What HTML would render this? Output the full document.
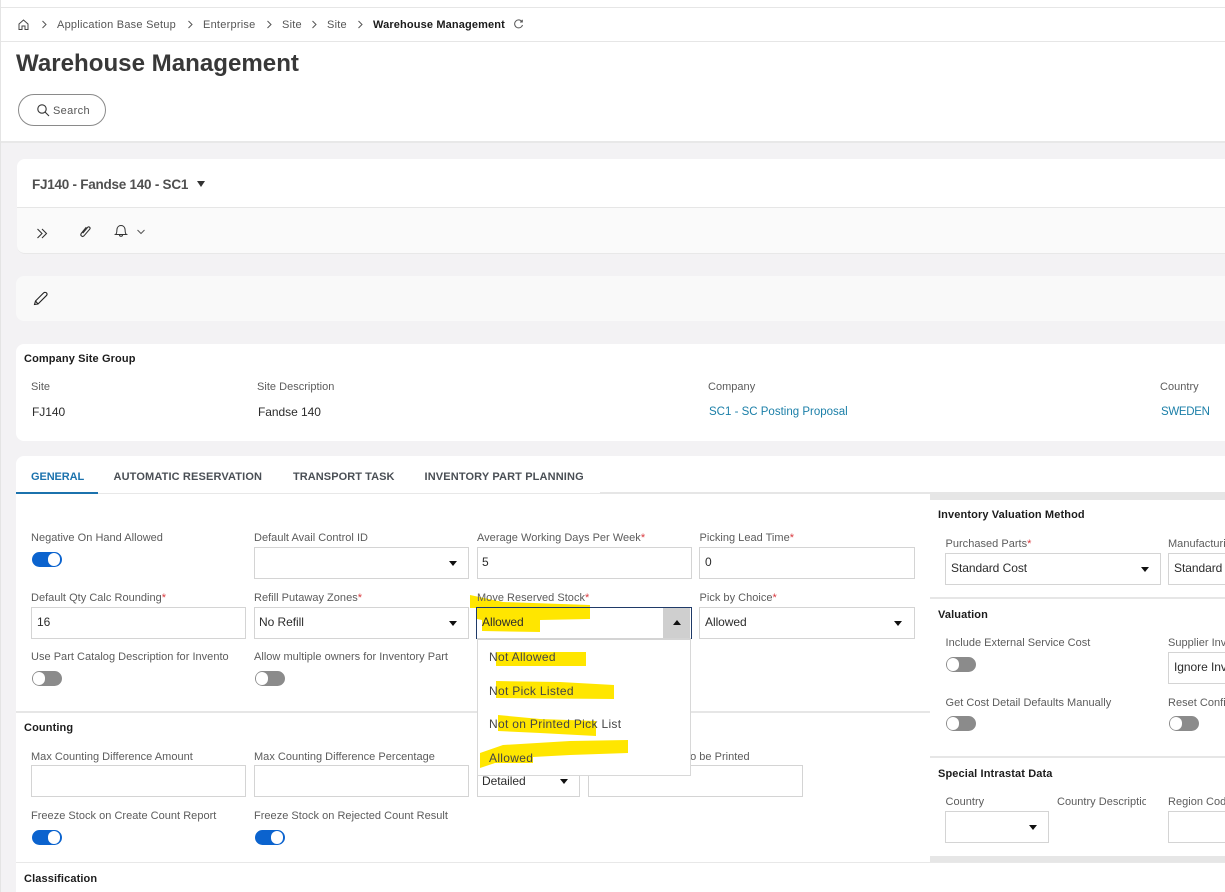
<!DOCTYPE html>
<html><head><meta charset="utf-8"><title>Warehouse Management</title>
<style>
html,body{margin:0;padding:0}
body{width:1225px;height:892px;overflow:hidden;position:relative;background:#f3f2f4;font-family:"Liberation Sans",sans-serif;font-size:11px;color:#333}
div,span,svg{position:absolute}
.l{color:#5c5c5c;white-space:nowrap;line-height:14px;letter-spacing:.02px;margin-top:1px}
.l i{color:#d9393e;font-style:normal}
.h{color:#1c1c1c;font-weight:bold;white-space:nowrap;line-height:14px;font-size:11px;letter-spacing:.12px;margin-top:1px}
.v{color:#2c2c2c;white-space:nowrap;line-height:14px;font-size:12px;letter-spacing:-.05px}
.a{color:#1b7fa8;white-space:nowrap;line-height:14px;font-size:11.5px;letter-spacing:0;margin-top:1px}
.f{background:#fff;border:1px solid #d4d4d4;height:30px;box-sizing:content-box}
.d{width:0;height:0;border-left:4px solid transparent;border-right:4px solid transparent;border-top:5px solid #111}
.u{width:30px;height:15px;border-radius:8px;background:#8b8b8b}
.u:after{content:"";position:absolute;left:1px;top:1px;width:12px;height:13px;border-radius:7px;background:#fff}
.o{background:#0b63ce}
.o:after{left:16px}
.tab{font-size:11px;font-weight:bold;color:#4a4f55;white-space:nowrap;line-height:14px;letter-spacing:.14px;margin-top:1px}
.bc{color:#555;white-space:nowrap;line-height:14px;letter-spacing:.24px;margin-top:1px}
.g{background:#e6e6e6}
.m{color:#444;letter-spacing:.32px;z-index:5}
</style></head><body>

<!-- top white area -->
<div style="left:1px;top:0;width:1224px;height:141px;background:#fff"></div>
<div style="left:0;top:0;width:1px;height:892px;background:#e4e4e4"></div>
<div style="left:1px;top:7px;width:1224px;height:1px;background:#e6e6e6"></div>
<div style="left:1px;top:41px;width:1224px;height:1px;background:#e6e6e6"></div>
<div style="left:1px;top:141px;width:1224px;height:2px;background:#e8e8e8"></div>

<!-- breadcrumb -->
<svg style="left:17px;top:18px" width="13" height="13" viewBox="0 0 13 13" fill="none" stroke="#444" stroke-width="1"><path d="M2 6 6.5 2 11 6V11.5H8V8H5V11.5H2Z"/></svg>
<svg style="left:40.5px;top:20px" width="7" height="9" viewBox="0 0 7 9" fill="none" stroke="#555"><path d="M1.5 1 5 4.5 1.5 8"/></svg>
<span class="bc" style="left:57px;top:17px">Application Base Setup</span>
<svg style="left:187px;top:20px" width="7" height="9" viewBox="0 0 7 9" fill="none" stroke="#555"><path d="M1.5 1 5 4.5 1.5 8"/></svg>
<span class="bc" style="left:203px;top:17px">Enterprise</span>
<svg style="left:266px;top:20px" width="7" height="9" viewBox="0 0 7 9" fill="none" stroke="#555"><path d="M1.5 1 5 4.5 1.5 8"/></svg>
<span class="bc" style="left:282px;top:17px">Site</span>
<svg style="left:311px;top:20px" width="7" height="9" viewBox="0 0 7 9" fill="none" stroke="#555"><path d="M1.5 1 5 4.5 1.5 8"/></svg>
<span class="bc" style="left:327px;top:17px">Site</span>
<svg style="left:357px;top:20px" width="7" height="9" viewBox="0 0 7 9" fill="none" stroke="#555"><path d="M1.5 1 5 4.5 1.5 8"/></svg>
<span style="left:373px;top:18px;font-weight:bold;color:#1b1b1b;white-space:nowrap;line-height:14px;letter-spacing:.14px">Warehouse Management</span>
<svg style="left:513px;top:19px" width="11" height="11" viewBox="0 0 11 11" fill="none" stroke="#555"><path d="M9 2.7A4 4 0 1 0 9.5 6M9.3 .8V3H7"/></svg>

<span style="left:16px;top:48px;font-size:24.1px;line-height:32px;font-weight:bold;color:#383838;white-space:nowrap">Warehouse Management</span>

<!-- search -->
<div style="left:18px;top:94px;width:86px;height:30px;border:1px solid #8a8a8a;border-radius:16px;background:#fff"></div>
<svg style="left:36px;top:103px" width="14" height="14" viewBox="0 0 14 14" fill="none" stroke="#333" stroke-width="1.1"><circle cx="6" cy="6" r="4.2"/><path d="M9 9 13 13"/></svg>
<span style="left:53px;top:104px;color:#555;line-height:14px;white-space:nowrap;letter-spacing:.35px">Search</span>

<!-- header card -->
<div style="left:17px;top:159px;width:1208px;height:94px;background:#fafafa;border-radius:8px 0 0 8px;border-bottom:1px solid #e8e8e8"></div>
<div style="left:17px;top:159px;width:1208px;height:48px;background:#fff;border-radius:8px 0 0 0;border-bottom:1px solid #e6e6e6"></div>
<span style="left:32px;top:176px;font-size:13.5px;line-height:17px;font-weight:bold;color:#505050;white-space:nowrap;letter-spacing:-.25px">FJ140 - Fandse 140 - SC1</span>
<div style="left:197px;top:181px;width:0;height:0;border-left:4.5px solid transparent;border-right:4.5px solid transparent;border-top:6px solid #333"></div>
<svg style="left:36px;top:227px" width="13" height="13" viewBox="0 0 13 13" fill="none" stroke="#333" stroke-width="1.1"><path d="M1.5 2 6 6.5 1.5 11M6 2 10.5 6.5 6 11"/></svg>
<svg style="left:78px;top:224px" width="14" height="14" viewBox="0 0 14 14" fill="none" stroke="#333" stroke-width="1.1"><path d="M4.8 9.2 9.6 3.4C10.8 2 12.9 3.6 11.7 5.2L6 11.8C4.4 13.5 1.9 11.4 3.2 9.5L8.3 3.2"/></svg>
<svg style="left:113.5px;top:224px" width="14" height="14" viewBox="0 0 14 14" fill="none" stroke="#333" stroke-width="1"><path d="M1.5 10.5C3 9.5 2.8 7.5 2.9 5.8 3.1 3 4.9 1.5 7 1.5S10.9 3 11.1 5.8C11.2 7.5 11 9.5 12.5 10.5ZM5.4 10.8C5.6 12.8 8.4 12.8 8.6 10.8"/></svg>
<svg style="left:136px;top:228px" width="10" height="8" viewBox="0 0 10 8" fill="none" stroke="#555"><path d="M1.5 2 5 5.5 8.5 2"/></svg>

<!-- edit bar -->
<div style="left:16px;top:276px;width:1209px;height:45px;background:#f9f9f9;border-radius:8px 0 0 8px"></div>
<svg style="left:33px;top:291px" width="15" height="15" viewBox="0 0 15 15" fill="none" stroke="#222" stroke-width="1.1"><path d="M1.5 13.5 2.5 10 10.5 2C11.5 1 13 1.3 13.6 2 14.2 2.8 14.2 3.8 13.3 4.7L5 13ZM2.5 10 5 13"/></svg>

<!-- company site group -->
<div style="left:16px;top:344px;width:1209px;height:97px;background:#fff;border-radius:8px 0 0 8px"></div>
<span class="h" style="left:24px;top:351px">Company Site Group</span>
<span class="l" style="left:31px;top:379px">Site</span>
<span class="l" style="left:257px;top:379px">Site Description</span>
<span class="l" style="left:708px;top:379px">Company</span>
<span class="l" style="left:1160px;top:379px">Country</span>
<span class="v" style="left:32px;top:405px">FJ140</span>
<span class="v" style="left:258px;top:405px">Fandse 140</span>
<span class="a" style="left:709px;top:404px">SC1 - SC Posting Proposal</span>
<span class="a" style="left:1161px;top:404px;letter-spacing:-.3px">SWEDEN</span>

<!-- main card -->
<div style="left:16px;top:456px;width:1209px;height:436px;background:#fff;border-radius:8px 0 0 0"></div>
<span class="tab" style="left:31px;top:469px;color:#1b72ad;letter-spacing:-.1px">GENERAL</span>
<span class="tab" style="left:113.5px;top:469px">AUTOMATIC RESERVATION</span>
<span class="tab" style="left:293px;top:469px;letter-spacing:.06px">TRANSPORT TASK</span>
<span class="tab" style="left:424.5px;top:469px">INVENTORY PART PLANNING</span>
<div style="left:98px;top:493px;width:1127px;height:1px;background:#e8e8e8"></div>
<div style="left:16px;top:492px;width:82px;height:2px;background:#1b72ad"></div>

<!-- right column gutters -->
<div class="g" style="left:600px;top:492px;width:625px;height:2px"></div>
<div class="g" style="left:930px;top:493px;width:295px;height:7px"></div>
<div class="g" style="left:930px;top:597px;width:295px;height:2px"></div>
<div class="g" style="left:930px;top:756px;width:295px;height:2px"></div>
<div class="g" style="left:930px;top:856px;width:295px;height:7px"></div>
<div style="left:16px;top:711px;width:914px;height:2px;background:#e6e6e6"></div>
<div style="left:16px;top:862px;width:1209px;height:1px;background:#e8e8e8"></div>

<!-- general fields -->
<span class="l" style="left:31px;top:530px">Negative On Hand Allowed</span>
<div class="u o" style="left:32px;top:552px"></div>
<span class="l" style="left:254px;top:530px">Default Avail Control ID</span>
<div class="f" style="left:254px;top:547px;width:213px"></div><div class="d" style="left:449px;top:561px"></div>
<span class="l" style="left:477px;top:530px">Average Working Days Per Week<i>*</i></span>
<div class="f" style="left:477px;top:547px;width:213px"></div><span class="v" style="left:482px;top:555px">5</span>
<span class="l" style="left:699.5px;top:530px">Picking Lead Time<i>*</i></span>
<div class="f" style="left:699px;top:547px;width:214px"></div><span class="v" style="left:705px;top:555px">0</span>

<span class="l" style="left:31px;top:590px">Default Qty Calc Rounding<i>*</i></span>
<div class="f" style="left:31px;top:607px;width:213px"></div><span class="v" style="left:37px;top:615px">16</span>
<span class="l" style="left:254px;top:590px">Refill Putaway Zones<i>*</i></span>
<div class="f" style="left:254px;top:607px;width:213px"></div><span class="v" style="left:259px;top:615px">No Refill</span><div class="d" style="left:449px;top:621px"></div>
<span class="l" style="left:699.5px;top:590px">Pick by Choice<i>*</i></span>
<div class="f" style="left:699px;top:607px;width:214px"></div><span class="v" style="left:705px;top:615px">Allowed</span><div class="d" style="left:894px;top:621px"></div>

<span class="l" style="left:31px;top:649px;width:200px;overflow:hidden">Use Part Catalog Description for Invento</span>
<div class="u" style="left:32px;top:671px"></div>
<span class="l" style="left:254px;top:649px">Allow multiple owners for Inventory Part</span>
<div class="u" style="left:255px;top:671px"></div>

<!-- counting -->
<span class="h" style="left:24px;top:720px">Counting</span>
<span class="l" style="left:31px;top:749px">Max Counting Difference Amount</span>
<div class="f" style="left:31px;top:765px;width:213px"></div>
<span class="l" style="left:254px;top:749px">Max Counting Difference Percentage</span>
<div class="f" style="left:254px;top:765px;width:213px"></div>
<span class="l" style="left:687px;top:749px">to be Printed</span>
<div class="f" style="left:477px;top:765px;width:101px"></div><span class="v" style="left:482px;top:774px">Detailed</span><div class="d" style="left:560px;top:779px"></div>
<div class="f" style="left:588px;top:765px;width:213px"></div>
<span class="l" style="left:31px;top:808px">Freeze Stock on Create Count Report</span>
<div class="u o" style="left:32px;top:830px"></div>
<span class="l" style="left:254px;top:808px">Freeze Stock on Rejected Count Result</span>
<div class="u o" style="left:255px;top:830px"></div>
<span class="h" style="left:24px;top:871px">Classification</span>

<!-- right column -->
<span class="h" style="left:938px;top:507px">Inventory Valuation Method</span>
<span class="l" style="left:945.5px;top:536px">Purchased Parts<i>*</i></span>
<div class="f" style="left:945px;top:553px;width:214px"></div><span class="v" style="left:951px;top:561px">Standard Cost</span><div class="d" style="left:1141px;top:567px"></div>
<span class="l" style="left:1168px;top:536px">Manufacturi</span>
<div class="f" style="left:1168px;top:553px;width:80px"></div><span class="v" style="left:1174px;top:561px">Standard</span>

<span class="h" style="left:938px;top:607px">Valuation</span>
<span class="l" style="left:945.5px;top:635px">Include External Service Cost</span>
<div class="u" style="left:946px;top:657px"></div>
<span class="l" style="left:1168px;top:635px">Supplier Inv</span>
<div class="f" style="left:1168px;top:652px;width:80px"></div><span class="v" style="left:1174px;top:660px">Ignore Inv</span>
<span class="l" style="left:945.5px;top:695px">Get Cost Detail Defaults Manually</span>
<div class="u" style="left:946px;top:716px"></div>
<span class="l" style="left:1168px;top:695px">Reset Confi</span>
<div class="u" style="left:1169px;top:716px"></div>

<span class="h" style="left:938px;top:766px">Special Intrastat Data</span>
<span class="l" style="left:945.5px;top:794px">Country</span>
<div class="f" style="left:945px;top:811px;width:102px"></div><div class="d" style="left:1029px;top:825px"></div>
<span class="l" style="left:1057px;top:794px;width:89px;overflow:hidden">Country Description</span>
<span class="l" style="left:1168px;top:794px">Region Cod</span>
<div class="f" style="left:1168px;top:811px;width:80px"></div>

<!-- yellow highlight under label & open field -->
<svg style="left:0;top:0;z-index:2" width="1225" height="892"><polygon fill="#ffe600" points="470,595 503,602 590,605 590,619 540,620 540,632 482,631 482,620 477,619 477,608 470,608"/></svg>

<!-- open combo -->
<span class="l" style="left:477px;top:590px;z-index:3">Move Reserved Stock<i>*</i></span>
<div style="left:476px;top:607px;width:214px;height:31px;border:1px solid #1f3a68;border-bottom:0;z-index:3"></div>
<div style="left:663px;top:608px;width:27px;height:30px;background:#cfcfcf;z-index:3"></div>
<div style="left:673px;top:620px;width:0;height:0;border-left:4px solid transparent;border-right:4px solid transparent;border-bottom:5px solid #111;z-index:4"></div>
<span class="v" style="left:482px;top:615px;z-index:4">Allowed</span>

<!-- dropdown list -->
<div style="left:477px;top:638px;width:212px;height:135px;background:#fff;border:1px solid #d8d8d8;border-top:2px solid #d4d4d4;z-index:3"></div>
<svg style="left:0;top:0;z-index:4" width="1225" height="892">
<polygon fill="#ffe600" points="496,652 586,652 586,666 496,666"/>
<polygon fill="#ffe600" points="496,681 560,682 614,685 614,699 496,698"/>
<polygon fill="#ffe600" points="498,715 540,719 596,721 596,736 540,733 498,731"/>
<polygon fill="#ffe600" points="480,753 503,745 570,741 628,740 628,753 570,755 533,757 533,763 495,763 480,768"/>
</svg>
<span class="v m" style="left:489px;top:650px">Not Allowed</span>
<span class="v m" style="left:489px;top:684px">Not Pick Listed</span>
<span class="v m" style="left:489px;top:717px">Not on Printed Pick List</span>
<span class="v m" style="left:489px;top:751px">Allowed</span>
</body></html>
